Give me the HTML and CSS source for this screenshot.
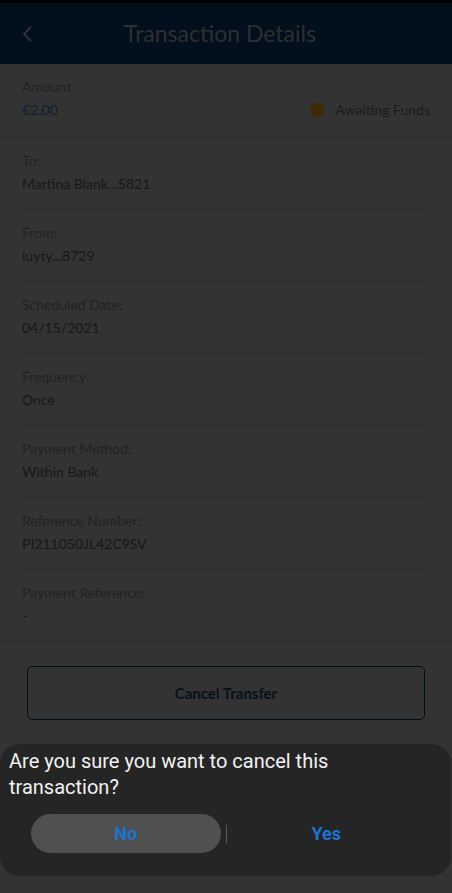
FILE: index.html
```html
<!DOCTYPE html>
<html lang="en">
<head>
  <meta charset="UTF-8" />
  <meta name="viewport" content="width=device-width, initial-scale=1" />
  <title>Transaction Details</title>
  <link rel="stylesheet" href="styles.css">
</head>
<body>
  <div class="status-bar"></div>

  <header class="top-bar">
    <button class="back-btn" aria-label="Back">
      <svg width="12" height="18" viewBox="0 0 12 18">
        <path d="M10 2 L3 9 L10 16" fill="none" stroke="currentColor" stroke-width="2" />
      </svg>
    </button>
    <h1>Transaction Details</h1>
  </header>

  <section class="summary">
    <div class="summary-left">
      <div class="label">Amount:</div>
      <div class="amount">€2.00</div>
    </div>
    <div class="status">
      <span class="dot"></span>
      <span>Awaiting Funds</span>
    </div>
  </section>

  <section class="details">
    <div class="row">
      <div class="label">To:</div>
      <div class="value">Martina Blank...5821</div>
    </div>
    <div class="row">
      <div class="label">From:</div>
      <div class="value">iuyty...8729</div>
    </div>
    <div class="row">
      <div class="label">Scheduled Date:</div>
      <div class="value">04/15/2021</div>
    </div>
    <div class="row">
      <div class="label">Frequency:</div>
      <div class="value">Once</div>
    </div>
    <div class="row">
      <div class="label">Payment Method:</div>
      <div class="value">Within Bank</div>
    </div>
    <div class="row">
      <div class="label">Reference Number:</div>
      <div class="value">PI211050JL42C9SV</div>
    </div>
    <div class="row">
      <div class="label">Payment Reference:</div>
      <div class="value">-</div>
    </div>
  </section>

  <div class="actions">
    <button class="cancel-btn">Cancel Transfer</button>
  </div>

  <div class="sheet">
    <p class="sheet-msg">Are you sure you want to cancel this transaction?</p>
    <div class="sheet-buttons">
      <button class="sheet-btn active">No</button>
      <span class="sheet-divider"></span>
      <button class="sheet-btn">Yes</button>
    </div>
  </div>
</body>
</html>
```

FILE: styles.css
```css
body {
  margin: 0;
  width: 452px;
  height: 893px;
  background: #333333;
  font-family: Lato, "Noto Sans", sans-serif;
  position: relative;
  overflow: hidden;
}
.status-bar {
  height: 3px;
  background: #000;
}
.top-bar {
  height: 61px;
  background: #020f1d;
  display: flex;
  align-items: center;
  justify-content: center;
  position: relative;
}
.top-bar h1 {
  margin: 0 12px 0 0;
  font-size: 23px;
  font-weight: 400;
  color: #2c2f33;
  padding-bottom: 2px;
}
.back-btn {
  position: absolute;
  left: 21px;
  top: 22px;
  background: none;
  border: none;
  padding: 0;
  color: #303236;
}
.label {
  font-size: 14px;
  line-height: 20px;
  color: #222222;
}
.value {
  font-size: 14px;
  line-height: 20px;
  margin-top: 3px;
  color: #181818;
}
.summary {
  display: flex;
  justify-content: space-between;
  align-items: flex-end;
  padding: 13px 22px 17px;
  border-bottom: 1px solid #2c2c2c;
}
.amount {
  font-size: 14px;
  line-height: 20px;
  margin-top: 3px;
  color: #0f1f31;
}
.status {
  display: flex;
  align-items: center;
  gap: 11px;
  font-size: 14px;
  line-height: 20px;
  color: #1b1b1b;
}
.dot {
  width: 14px;
  height: 14px;
  border-radius: 50%;
  background: #3f2a03;
}
.details {
  padding: 0 22px;
  border-bottom: 1px solid #2c2c2c;
}
.row {
  padding: 13px 0 15px;
  border-bottom: 1px solid #2c2c2c;
}
.row:last-child {
  border-bottom: none;
}
.actions {
  padding: 24px 27px 0;
}
.cancel-btn {
  width: 100%;
  height: 54px;
  background: transparent;
  border: 1.5px solid #060d16;
  border-radius: 5px;
  font-family: Lato, "Noto Sans", sans-serif;
  font-size: 15px;
  font-weight: 700;
  color: #08111b;
}
.sheet {
  position: absolute;
  left: 0;
  top: 744px;
  width: 451px;
  height: 132px;
  box-sizing: border-box;
  background: #252525;
  border-radius: 20px;
  padding: 4px 9px 0;
  font-family: Roboto, sans-serif;
}
.sheet-msg {
  margin: 0;
  font-size: 20px;
  line-height: 26px;
  color: #f2f2f2;
}
.sheet-buttons {
  display: flex;
  align-items: center;
  margin: 14px 0 0 22px;
  width: 390px;
}
.sheet-btn {
  flex: 1;
  height: 39px;
  border: none;
  border-radius: 20px;
  background: transparent;
  font-family: Roboto, sans-serif;
  font-size: 18px;
  font-weight: 700;
  color: #1a75d2;
}
.sheet-btn.active {
  background: #505050;
}
.sheet-divider {
  width: 1px;
  height: 18px;
  margin: 0 5px;
  background: #5a5a5a;
}
```
